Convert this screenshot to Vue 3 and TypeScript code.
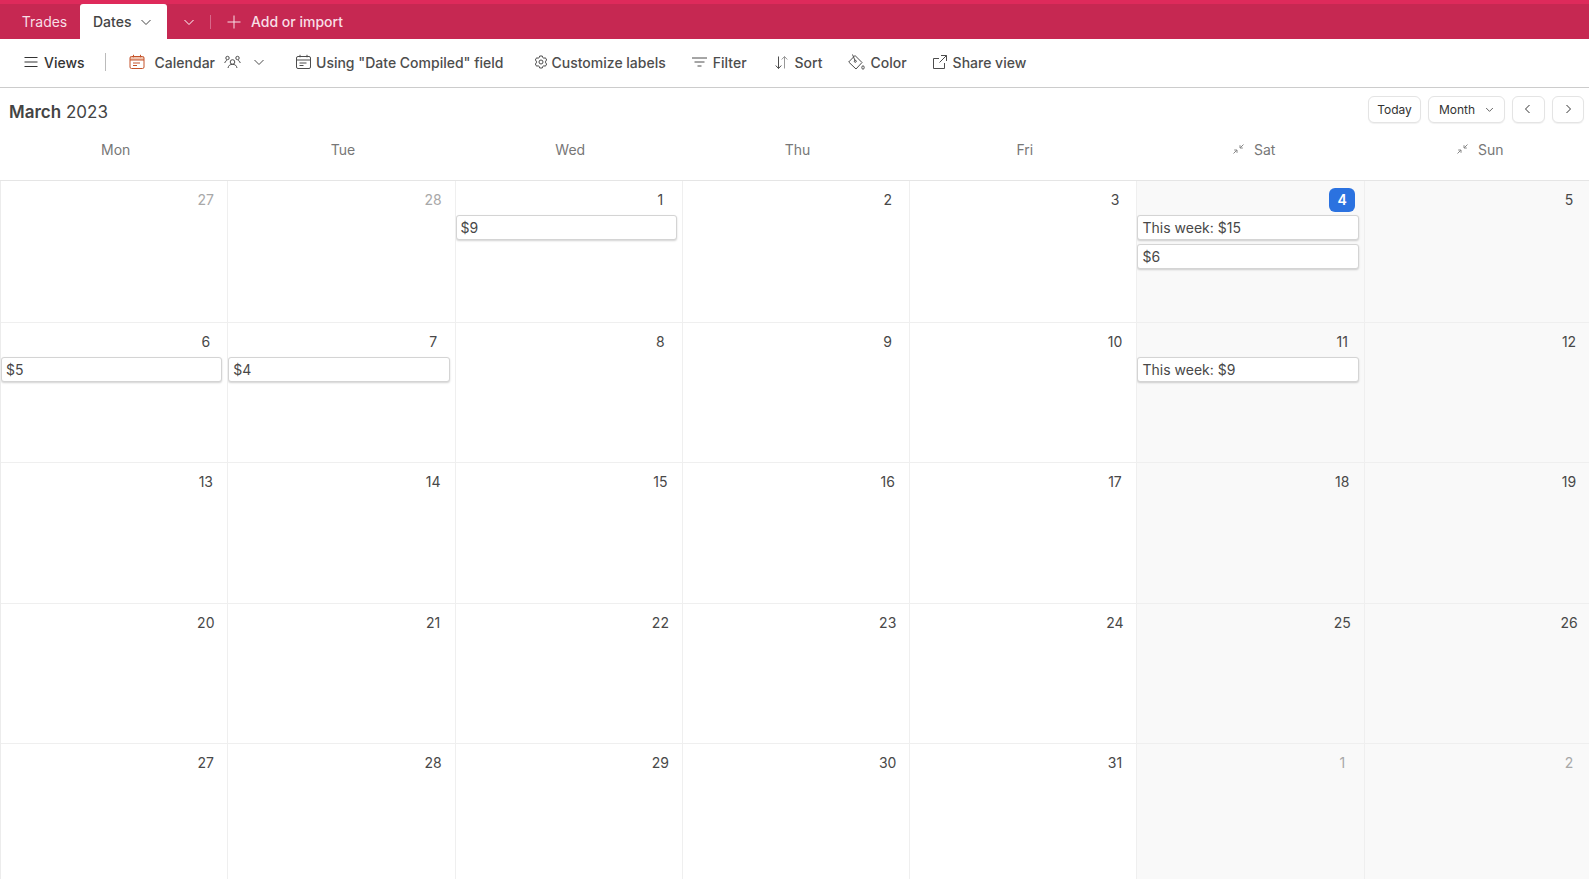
<script setup lang="ts">
interface Day { n: number; muted?: boolean; today?: boolean; events?: string[] }
const days: Day[] = [
  { n: 27, muted: true }, { n: 28, muted: true }, { n: 1, events: ['$9'] }, { n: 2 }, { n: 3 },
  { n: 4, today: true, events: ['This week: $15', '$6'] }, { n: 5 },
  { n: 6, events: ['$5'] }, { n: 7, events: ['$4'] }, { n: 8 }, { n: 9 }, { n: 10 },
  { n: 11, events: ['This week: $9'] }, { n: 12 },
  { n: 13 }, { n: 14 }, { n: 15 }, { n: 16 }, { n: 17 }, { n: 18 }, { n: 19 },
  { n: 20 }, { n: 21 }, { n: 22 }, { n: 23 }, { n: 24 }, { n: 25 }, { n: 26 },
  { n: 27 }, { n: 28 }, { n: 29 }, { n: 30 }, { n: 31 }, { n: 1, muted: true }, { n: 2, muted: true },
]
const heads = ['Mon', 'Tue', 'Wed', 'Thu', 'Fri', 'Sat', 'Sun']
</script>

<template>
  <div class="page">
    <header class="tabs">
      <span class="tab-plain">Trades</span>
      <span class="tab-active">Dates
        <svg class="chev" width="12" height="12" viewBox="0 0 12 12"><path d="M1.5 4l4.5 4.5L10.5 4" /></svg>
      </span>
      <svg class="chev tab-more" width="12" height="12" viewBox="0 0 12 12"><path d="M1.5 4l4.5 4.5L10.5 4" /></svg>
      <span class="tab-sep"></span>
      <span class="add">
        <svg width="14" height="14" viewBox="0 0 14 14"><path d="M7 .5v13M.5 7h13" /></svg>
        Add or import
      </span>
    </header>

    <nav class="toolbar">
      <span class="tool views">
        <svg width="14" height="12" viewBox="0 0 14 12"><path d="M.5 1.5h13M.5 6h13M.5 10.5h13" /></svg>
        Views
      </span>
      <span class="divider"></span>
      <span class="tool calendar">
        <svg class="orange" width="16" height="16" viewBox="0 0 16 16"><rect class="band" x="1" y="2.5" width="14" height="3.5" /><rect x="1" y="2.5" width="14" height="12" rx="1.5" /><path d="M1 6h14M4.5 .8v2.5M11.5 .8v2.5M4 9h7M4 11.5h4" /></svg>
        <span class="cal-label">Calendar</span>
        <svg class="people" width="17" height="14" viewBox="0 0 17 14"><circle cx="8.5" cy="7" r="2.3" /><circle cx="3.5" cy="3" r="1.7" /><circle cx="13.5" cy="3" r="1.7" /><path d="M4 13c.5-2.500 2-3.700 4.500-3.700S12.500 10.500 13 13M.8 8c.3-1.500 1-2.300 2.200-2.500M16.200 8c-.3-1.500-1-2.300-2.200-2.500" /></svg>
        <svg class="chev dark" width="12" height="12" viewBox="0 0 12 12"><path d="M1.5 4l4.5 4.5L10.5 4" /></svg>
      </span>
      <span class="tool field">
        <svg width="15" height="16" viewBox="0 0 15 16"><rect x=".5" y="2.5" width="14" height="12" rx="1.5" /><path d="M.5 6h14M4 .8v2.500M11 .8v2.500M3.500 9h7M3.500 11.500h4" /></svg>
        Using "Date Compiled" field
      </span>
      <span class="tool labels">
        <svg width="14" height="14" viewBox="0 0 14 14"><circle cx="7" cy="7" r="2" /><path d="M5.700 1h2.600l.4 1.500 1.200.7 1.500-.4 1.300 2.200-1.100 1.100v1.800l1.100 1.100-1.300 2.200-1.500-.4-1.200.7-.4 1.500H5.700l-.4-1.500-1.200-.7-1.500.4-1.300-2.200 1.100-1.100V6.100L1.300 5l1.300-2.200 1.500.4 1.200-.7z" /></svg>
        Customize labels
      </span>
      <span class="tool filter">
        <svg width="15" height="10" viewBox="0 0 15 10"><path d="M0 1h15M2.500 5h10M5.500 9h4" /></svg>
        Filter
      </span>
      <span class="tool sort">
        <svg width="13" height="13" viewBox="0 0 13 13"><path d="M3.500 .5v12M.7 9.500l2.800 3 2.800-3" /><path class="light" d="M9.500 12.500V.5M6.700 3.500l2.800-3 2.800 3" /></svg>
        Sort
      </span>
      <span class="tool color">
        <svg width="17" height="16" viewBox="0 0 17 16"><path d="M7 1.500l7 7-6 6.500L.7 8z" /><path d="M4.500 .5L7 6.500" /><circle cx="7.300" cy="7.300" r="1" /><ellipse cx="15" cy="13.500" rx="1.200" ry="1.700" /></svg>
        Color
      </span>
      <span class="tool share">
        <svg width="14" height="14" viewBox="0 0 14 14"><path d="M11.500 8v5.500H.5v-10H6M8 .5h5.500V6M13.500 .5L6.500 7.500" /></svg>
        Share view
      </span>
    </nav>

    <section class="title-row">
      <h1><b>March</b> 2023</h1>
      <div class="controls">
        <button class="btn btn-today">Today</button>
        <button class="btn month">Month
          <svg class="chev dark" width="9" height="9" viewBox="0 0 12 12"><path d="M1.5 4l4.5 4.5L10.5 4" /></svg>
        </button>
        <button class="btn nav"><svg width="8" height="10" viewBox="0 0 8 10"><path d="M5.500 1L1.500 5l4 4" /></svg></button>
        <button class="btn nav"><svg width="8" height="10" viewBox="0 0 8 10"><path d="M2.500 1l4 4-4 4" /></svg></button>
      </div>
    </section>

    <div class="heads">
      <div v-for="(h, i) in heads" :key="h" class="head" :class="{ 'head-wk': i > 4 }">
        <svg v-if="i > 4" class="collapse" width="11" height="10" viewBox="0 0 11 10"><path d="M10.500 .5L7 4M7 1.200V4h2.800M.5 9.500L4 6M4 8.800V6H1.200" /></svg>
        {{ h }}
      </div>
    </div>

    <main class="grid">
      <div v-for="(d, i) in days" :key="i" class="cell" :class="{ weekend: i % 7 > 4 }">
        <div class="num-row">
          <span class="num" :class="{ muted: d.muted, 'is-today': d.today }">{{ d.n }}</span>
        </div>
        <div v-for="e in d.events" :key="e" class="event">{{ e }}</div>
      </div>
    </main>
  </div>
</template>

<style>
html, body { margin: 0; height: 100%; background: #fff; }
#app { height: 100%; }
</style>

<style scoped>
.page {
  height: 879px;
  overflow: hidden;
  display: flex;
  flex-direction: column;
  font-family: Inter, "Liberation Sans", sans-serif;
  color: #444;
}
svg { fill: none; stroke: currentColor; stroke-width: 1; flex: none; }
.tabs {
  height: 39px;
  box-sizing: border-box;
  background: #c62852;
  border-top: 4px solid #de2a5b;
  display: flex;
  align-items: center;
  color: #fff;
  font-size: 14px;
  flex: none;
}
.tab-plain { width: 80px; text-align: center; padding-left: 9px; box-sizing: border-box; color: #f8dfe6; }
.tab-active {
  width: 87px;
  height: 35px;
  box-sizing: border-box;
  background: #fff;
  color: #444;
  border-radius: 3px 3px 0 0;
  display: flex;
  align-items: center;
  gap: 9px;
  padding-left: 13px;
  font-weight: 500;
}
.tab-more { margin-left: 16px; }
.tab-sep { width: 1px; height: 14px; background: #d8688a; margin: 0 16px 0 15px; }
.add { display: flex; align-items: center; gap: 10px; color: #f8dfe6; font-weight: 500; }
.toolbar {
  height: 49px;
  box-sizing: border-box;
  border-bottom: 1px solid #ccc;
  display: flex;
  align-items: center;
  font-size: 14px;
  font-weight: 500;
  flex: none;
  padding: 0 0 2px 24px;
}
.tool { display: flex; align-items: center; gap: 6px; white-space: nowrap; color: #4d4d4d; }
.views { color: #333; }
.divider { width: 1px; height: 18px; background: #bbb; margin: 0 23px 0 20px; }
.orange { color: #c4532a; }
.band { fill: #f0c4b0; stroke: none; }
.cal-label { margin-left: 4px; }
.people { margin-left: 3px; }
.calendar .chev { margin-left: 6px; }
.light { color: #999; }
.field { margin-left: 31px; gap: 5px; }
.labels { margin-left: 30px; gap: 4px; }
.filter { margin-left: 26px; gap: 6px; }
.sort { margin-left: 28px; gap: 7px; }
.color { margin-left: 26px; gap: 5px; }
.share { margin-left: 26px; gap: 6px; }
.title-row {
  height: 48px;
  flex: none;
  display: flex;
  align-items: center;
  justify-content: space-between;
  padding: 0 5px 0 9px;
}
h1 { margin: 0; font-size: 17px; font-weight: 400; color: #444; }
h1 b { font-weight: 600; }
.controls { display: flex; gap: 7px; margin-bottom: 6px; }
.btn {
  height: 27px;
  box-sizing: border-box;
  background: #fff;
  border: 1px solid #e4e4e4;
  border-radius: 6px;
  box-shadow: 0 1px 1px rgba(0,0,0,.06);
  font: 400 12px Inter, "Liberation Sans", sans-serif;
  color: #333;
  display: flex;
  align-items: center;
  justify-content: center;
  padding: 0;
}
.btn-today { width: 53px; }
.month { width: 77px; gap: 10px; }
.nav { width: 32.5px; }
.heads {
  height: 44px;
  flex: none;
  display: grid;
  grid-template-columns: repeat(6, 227.3px) 1fr;
  border-bottom: 1px solid #e5e5e5;
  font-size: 14px;
  color: #777;
}
.head { display: flex; align-items: flex-start; justify-content: center; gap: 10px; padding: 5px 0 0 4px; line-height: 17px; }
.head-wk { padding-left: 8px; }
.collapse { color: #888; margin-top: 3px; }
.grid {
  flex: 1;
  min-height: 0;
  display: grid;
  grid-template-columns: repeat(6, 227.3px) 1fr;
  grid-template-rows: 141.5px repeat(4, 140.5px);
  border-left: 1px solid #ececec;
}
.cell {
  box-sizing: border-box;
  border-right: 1px solid #efefef;
  border-bottom: 1px solid #efefef;
  overflow: hidden;
}
.cell:nth-child(7n) { border-right: 0; }
.cell:nth-child(7n) .num-row { padding-right: 7px; }
.weekend { background: #f9f9f9; }
.num-row { display: flex; justify-content: flex-end; padding: 7px 8.5px 0 0; height: 31px; box-sizing: border-box; margin-bottom: 3px; }
.num { font-size: 14px; line-height: 24px; color: #484848; min-width: 26px; text-align: center; }
.muted { color: #a8a8a8; }
.is-today {
  background: #2b72e0;
  color: #fff;
  font-weight: 600;
  border-radius: 6px;
}
.event {
  height: 25px;
  box-sizing: border-box;
  margin: 0 5px 4px 0;
  padding-left: 4px;
  background: #fff;
  border: 1px solid #d4d4d4;
  border-radius: 3px;
  box-shadow: 0 1px 2px rgba(0,0,0,.18);
  font-size: 14px;
  line-height: 23px;
  color: #484848;
  white-space: nowrap;
}
</style>
